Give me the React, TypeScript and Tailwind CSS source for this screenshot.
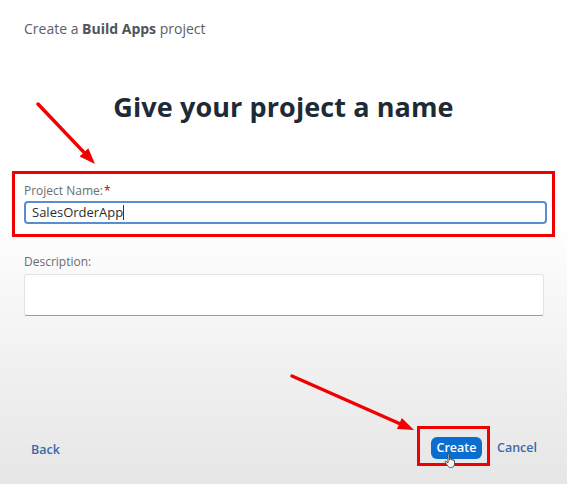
import React from "react";

function Arrow({ x1, y1, x2, y2 }: { x1: number; y1: number; x2: number; y2: number }) {
  const a = Math.atan2(y2 - y1, x2 - x1);
  const L = 16;
  const W = 6;
  const bx = x2 - L * Math.cos(a);
  const by = y2 - L * Math.sin(a);
  const px = -Math.sin(a) * W;
  const py = Math.cos(a) * W;
  return (
    <g>
      <line x1={x1} y1={y1} x2={bx} y2={by} stroke="#f00000" strokeWidth={3.5} strokeLinecap="round" />
      <polygon points={`${x2},${y2} ${bx + px},${by + py} ${bx - px},${by - py}`} fill="#f00000" />
    </g>
  );
}

export default function App() {
  return (
    <div
      className="relative w-[567px] h-[484px] overflow-hidden bg-[linear-gradient(to_bottom,#ffffff_0%,#ffffff_45%,#f3f3f3_70%,#e6e6e6_100%)] text-[#32363a]"
      style={{ fontFamily: '"Open Sans", "Noto Sans", Arial, sans-serif' }}
    >
      <div className="flex flex-col h-full">
        <div className="pl-6 pt-[18px] text-[14px] text-[#5b6067]">
          Create a <span className="font-bold text-[#4f545b]">Build Apps</span> project
        </div>

        <h1 className="mt-[50px] text-center text-[27px] font-bold text-[#1e2a36] tracking-[0.1px] leading-[36px]">
          Give your project a name
        </h1>

        <div className="mt-[46px] mx-3 border-[3px] border-[#f00000] pl-[9px] pr-[5px] pt-[9px] pb-[10px]">
          <div className="text-[12px] text-[#6a6d70] leading-[16px]">
            Project Name:<span className="text-[#bb0000] ml-[1px]">*</span>
          </div>
          <div className="mt-[2px] h-[23px] rounded-[4px] border-[2px] border-[#5a8cd0] bg-white flex items-center pl-[6px] text-[13px] text-[#2a2d30]">
            SalesOrderApp<span className="inline-block w-[1px] h-[15px] bg-[#333]" />
          </div>
        </div>

        <div className="mt-[17px] px-6">
          <div className="text-[12px] text-[#6a6d70] leading-[16px]">Description:</div>
          <div className="mt-[4px] h-[42px] w-[520px] rounded-[3px] border border-[#e3e3e3] border-b-[#9a9a9a] bg-white" />
        </div>

        <div className="mt-auto mb-[18px] flex items-center pl-[31px] pr-[30px]">
          <span className="pt-[8px] text-[12.5px] font-semibold text-[#3a6aa8]">Back</span>
          <div className="ml-auto flex items-center">
            <div className="border-[3px] border-[#f00000] pl-[11px] pr-[5px] pt-[8px] pb-[4px]">
              <div className="relative rounded-[6px] bg-[#0a6ed1] w-[51px] justify-center h-[22px] flex items-center text-[12.5px] font-semibold text-white">
                Create
                <svg className="absolute left-[13px] top-[16px]" width="14" height="16" viewBox="0 0 14 16">
                  <path
                    d="M4 1.5c0-.8 1.5-.8 1.5 0V7l.5-.2V5.5c0-.8 1.5-.8 1.5 0v1.3c0-.8 1.5-.8 1.5 0v.8c0-.8 1.5-.8 1.5 0V11c0 2-1.2 3.5-3.2 3.5H6.5C5 14.5 4 13.5 3 12L1.2 9.2c-.5-.8.5-1.5 1.1-.8L4 10V1.5z"
                    fill="#f4f4f4"
                    stroke="#444"
                    strokeWidth="0.9"
                  />
                </svg>
              </div>
            </div>
            <span className="ml-[7px] pt-[4px] text-[12.5px] font-semibold text-[#3a6aa8]">Cancel</span>
          </div>
        </div>
      </div>

      <svg className="absolute inset-0 pointer-events-none" width="567" height="484">
        <Arrow x1={38} y1={104} x2={95} y2={164} />
        <Arrow x1={292} y1={376} x2={414} y2={430} />
      </svg>
    </div>
  );
}
